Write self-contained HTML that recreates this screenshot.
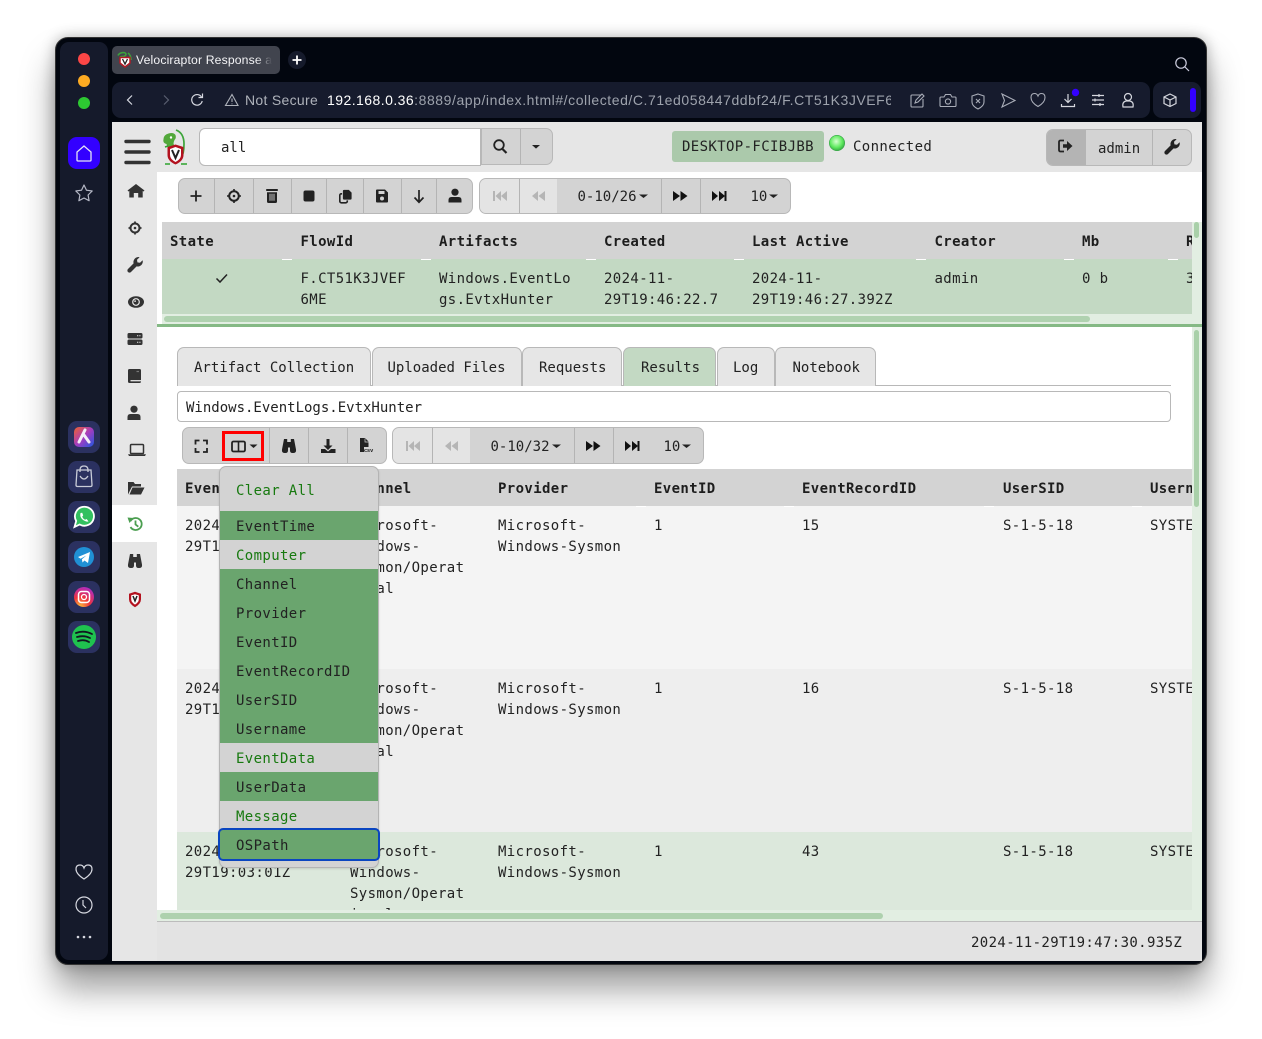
<!DOCTYPE html>
<html><head><meta charset="utf-8">
<style>
html,body{margin:0;padding:0;background:#fff;width:1262px;height:1039px;overflow:hidden}
div,span{position:absolute;box-sizing:border-box}
#win{left:55px;top:37px;width:1152px;height:928px;background:#02060f;border-radius:13px;box-shadow:0 24px 34px rgba(0,0,0,.38),0 0 14px rgba(0,0,0,.28);border:1px solid #333}
.b{font-family:"Liberation Sans",sans-serif;white-space:pre}
.t{font:14px/21px "DejaVu Sans Mono","Liberation Mono",monospace;color:#222;white-space:pre}
.w{letter-spacing:.37px}
.h{font-weight:bold;letter-spacing:.37px;font-size:14px;color:#1d1d1d}
.grp{background:#d3d3d3;border:1px solid #b8b8b8;border-radius:7px}
.sep{width:1px;background:#b4b4b4}
.tab{top:347px;height:39px;background:#e6e6e6;border:1px solid #b8b8b8;border-bottom:none;border-radius:7px 7px 0 0}
.tick{height:1px;width:10px;background:#fff}
.clip{overflow:hidden}
.it{left:1px;width:158px;height:29px;background:#6aa56e}
.gr{background:#d3d3d3}
.lbl{left:236px;letter-spacing:.37px}
.g{color:#17790f}
</style></head><body>
<div id="win"></div>
<div style="left:60px;top:42px;width:48px;height:918px;background:#151a2b;border-radius:9px"></div>
<div style="left:112px;top:46px;width:168px;height:28px;background:#41444e;border-radius:5px"></div>
<div class="b" style="left:136px;top:52px;width:138px;height:16px;overflow:hidden;font-size:12.2px;line-height:16px;color:#f4f4f6;letter-spacing:.15px">Velociraptor Response a</div>
<div style="left:256px;top:52px;width:20px;height:16px;background:linear-gradient(90deg,rgba(65,68,78,0),#41444e 80%)"></div>
<div style="left:112px;top:82px;width:1038px;height:36px;background:#161b2d;border-radius:9px"></div>
<div style="left:1153px;top:82px;width:48px;height:36px;background:#161b2d;border-radius:9px"></div>
<div class="b" style="left:245px;top:91px;font-size:14px;line-height:18px;color:#aeb2ba;letter-spacing:.3px">Not Secure</div>
<div class="b" style="left:327px;top:91px;width:564px;height:18px;overflow:hidden;font-size:14px;line-height:18px;color:#9ea3ad;letter-spacing:.56px"><span style="position:static;color:#fff;letter-spacing:.45px">192.168.0.36</span>:8889/app/index.html#/collected/C.71ed058447ddbf24/F.CT51K3JVEF6ME</div>

<!-- app -->
<div style="left:112px;top:122px;width:1090px;height:839px;background:#e6e6e6"></div>
<div style="left:157px;top:172px;width:1045px;height:749px;background:#fff"></div>
<div style="left:157px;top:921px;width:1045px;height:40px;background:#e3e3e3;border-top:1px solid #bcbcbc"></div>
<div style="left:112px;top:505px;width:45px;height:37px;background:#fff"></div>

<!-- header -->
<div style="left:199px;top:128px;width:282px;height:38px;background:#fff;border:1px solid #b8b8b8;border-radius:6px 0 0 6px"></div>
<div class="t" style="left:221px;top:138px">all</div>
<div class="grp" style="left:481px;top:128px;width:72px;height:37px;border-radius:0 7px 7px 0"><div class="sep" style="left:38px;top:0;height:35px"></div></div>
<div style="left:672px;top:131px;width:152px;height:31px;background:#abc9ab;border-radius:3px"></div>
<div class="t w" style="left:682px;top:137px">DESKTOP-FCIBJBB</div>
<div class="t w" style="left:853px;top:137px">Connected</div>
<div class="grp" style="left:1046px;top:129px;width:146px;height:37px;overflow:hidden">
  <div style="left:0;top:0;width:39px;height:35px;background:#b4b4b4"></div>
  <div class="sep" style="left:105px;top:0;height:35px"></div>
</div>
<div class="t" style="left:1098px;top:139px">admin</div>

<!-- toolbar 1 -->
<div class="grp" style="left:178px;top:178px;width:295px;height:36px">
  <div class="sep" style="left:35px;top:0;height:34px"></div><div class="sep" style="left:74px;top:0;height:34px"></div><div class="sep" style="left:112px;top:0;height:34px"></div><div class="sep" style="left:147px;top:0;height:34px"></div><div class="sep" style="left:184px;top:0;height:34px"></div><div class="sep" style="left:222px;top:0;height:34px"></div><div class="sep" style="left:257px;top:0;height:34px"></div>
</div>
<div class="grp" style="left:479px;top:178px;width:312px;height:36px;overflow:hidden">
  <div style="left:0;top:0;width:77px;height:34px;background:#e4e4e4"></div>
  <div class="sep" style="left:39px;top:0;height:34px"></div><div class="sep" style="left:181px;top:0;height:34px"></div><div class="sep" style="left:220px;top:0;height:34px"></div>
</div>
<div class="t" style="left:577.500px;top:187px">0-10/26</div>
<div class="t" style="left:750.500px;top:187px">10</div>

<!-- table 1 -->
<div style="left:1192px;top:222px;width:10px;height:102px;background:#e2eee2"></div>
<div style="left:162px;top:314px;width:1030px;height:10px;background:#e2eee2"></div>
<div style="left:162px;top:222px;width:1030px;height:37px;background:#d3d3d3"></div>
<div style="left:162px;top:259px;width:1030px;height:55px;background:#c3d9c3"></div>
<div style="left:164px;top:316px;width:926px;height:6px;background:#b0d2b0;border-radius:3px"></div>
<div style="left:1194px;top:222px;width:5px;height:16px;background:#a9d0a9;border-radius:3px"></div>
<div style="left:157px;top:324px;width:1045px;height:3px;background:#85b985"></div>
<div class="tick" style="left:282px;top:259px"></div><div class="tick" style="left:421px;top:259px"></div><div class="tick" style="left:586px;top:259px"></div><div class="tick" style="left:734px;top:259px"></div><div class="tick" style="left:916px;top:259px"></div><div class="tick" style="left:1064px;top:259px"></div><div class="tick" style="left:1168px;top:259px"></div>
<div class="clip" style="left:162px;top:222px;width:1030px;height:92px">
<div class="t h" style="left:8px;top:10px">State</div>
<div class="t h" style="left:138.500px;top:10px">FlowId</div>
<div class="t h" style="left:277px;top:10px">Artifacts</div>
<div class="t h" style="left:442px;top:10px">Created</div>
<div class="t h" style="left:590px;top:10px">Last Active</div>
<div class="t h" style="left:772.500px;top:10px">Creator</div>
<div class="t h" style="left:920px;top:10px">Mb</div>
<div class="t h" style="left:1024px;top:10px">R</div>
<div class="t w" style="left:138.500px;top:47px">F.CT51K3JVEF
6ME</div>
<div class="t w" style="left:277px;top:47px">Windows.EventLo
gs.EvtxHunter</div>
<div class="t w" style="left:442px;top:47px">2024-11-
29T19:46:22.7</div>
<div class="t w" style="left:590px;top:47px">2024-11-
29T19:46:27.392Z</div>
<div class="t w" style="left:772.500px;top:47px">admin</div>
<div class="t w" style="left:920px;top:47px">0 b</div>
<div class="t w" style="left:1024px;top:47px">3</div>
</div>

<!-- tabs -->
<div style="left:1192px;top:327px;width:10px;height:594px;background:#e2eee2"></div>
<div style="left:1194px;top:330px;width:5px;height:177px;background:#a9d0a9;border-radius:3px"></div>
<div style="left:177px;top:385px;width:994px;height:1px;background:#b8b8b8"></div>
<div class="tab" style="left:177px;width:194px"></div>
<div class="tab" style="left:372px;width:150px"></div>
<div class="tab" style="left:522px;width:100px"></div>
<div class="tab" style="left:623px;width:93px;background:#c3d9c3"></div>
<div class="tab" style="left:717px;width:58px"></div>
<div class="tab" style="left:775px;width:101px"></div>
<div class="t" style="left:194px;top:358px">Artifact Collection</div>
<div class="t" style="left:387.500px;top:358px">Uploaded Files</div>
<div class="t" style="left:539px;top:358px">Requests</div>
<div class="t" style="left:641px;top:358px">Results</div>
<div class="t" style="left:733px;top:358px">Log</div>
<div class="t" style="left:792.500px;top:358px">Notebook</div>
<div style="left:177px;top:391px;width:994px;height:31px;background:#fff;border:1px solid #b8b8b8;border-radius:4px"></div>
<div class="t" style="left:186px;top:398px">Windows.EventLogs.EvtxHunter</div>

<!-- toolbar 2 -->
<div class="grp" style="left:182px;top:427px;width:205px;height:37px">
  <div class="sep" style="left:86px;top:0;height:35px"></div><div class="sep" style="left:125px;top:0;height:35px"></div><div class="sep" style="left:164px;top:0;height:35px"></div>
</div>
<div style="left:222px;top:431px;width:42px;height:30px;border:3px solid #f00"></div>
<div class="grp" style="left:392px;top:427px;width:312px;height:37px;overflow:hidden">
  <div style="left:0;top:0;width:77px;height:35px;background:#e4e4e4"></div>
  <div class="sep" style="left:39px;top:0;height:35px"></div><div class="sep" style="left:181px;top:0;height:35px"></div><div class="sep" style="left:220px;top:0;height:35px"></div>
</div>
<div class="t" style="left:490.500px;top:437px">0-10/32</div>
<div class="t" style="left:663.500px;top:437px">10</div>

<!-- table 2 -->
<div class="clip" style="left:177px;top:469px;width:1015px;height:441px;background:#fff">
<div style="left:0;top:0;width:1015px;height:37px;background:#d3d3d3"></div>
<div style="left:0;top:37px;width:1015px;height:163px;background:#f4f4f4"></div>
<div style="left:0;top:200px;width:1015px;height:163px;background:#eeeeee"></div>
<div style="left:0;top:363px;width:1015px;height:78px;background:#dce8dc"></div>
<div class="tick" style="left:807px;top:37px"></div><div class="tick" style="left:955px;top:37px"></div><div class="tick" style="left:459px;top:37px"></div><div class="tick" style="left:607px;top:37px"></div>
<div class="t h" style="left:8px;top:10px">EventTime</div>
<div class="t h" style="left:173px;top:10px">Channel</div>
<div class="t h" style="left:321px;top:10px">Provider</div>
<div class="t h" style="left:477px;top:10px">EventID</div>
<div class="t h" style="left:625px;top:10px">EventRecordID</div>
<div class="t h" style="left:826px;top:10px">UserSID</div>
<div class="t h" style="left:973px;top:10px">Username</div>

<div class="t w" style="left:8px;top:47px">2024-11-
29T19:01:58Z</div>
<div class="t w" style="left:173px;top:47px">Microsoft-
Windows-
Sysmon/Operat
ional</div>
<div class="t w" style="left:321px;top:47px">Microsoft-
Windows-Sysmon</div>
<div class="t w" style="left:477px;top:47px">1</div>
<div class="t w" style="left:625px;top:47px">15</div>
<div class="t w" style="left:826px;top:47px">S-1-5-18</div>
<div class="t w" style="left:973px;top:47px">SYSTEM</div>

<div class="t w" style="left:8px;top:210px">2024-11-
29T19:02:07Z</div>
<div class="t w" style="left:173px;top:210px">Microsoft-
Windows-
Sysmon/Operat
ional</div>
<div class="t w" style="left:321px;top:210px">Microsoft-
Windows-Sysmon</div>
<div class="t w" style="left:477px;top:210px">1</div>
<div class="t w" style="left:625px;top:210px">16</div>
<div class="t w" style="left:826px;top:210px">S-1-5-18</div>
<div class="t w" style="left:973px;top:210px">SYSTEM</div>

<div class="t w" style="left:8px;top:373px">2024-11-
29T19:03:01Z</div>
<div class="t w" style="left:173px;top:373px">Microsoft-
Windows-
Sysmon/Operat
ional</div>
<div class="t w" style="left:321px;top:373px">Microsoft-
Windows-Sysmon</div>
<div class="t w" style="left:477px;top:373px">1</div>
<div class="t w" style="left:625px;top:373px">43</div>
<div class="t w" style="left:826px;top:373px">S-1-5-18</div>
<div class="t w" style="left:973px;top:373px">SYSTEM</div>
</div>
<div style="left:157px;top:910px;width:1035px;height:11px;background:#e2eee2"></div>
<div style="left:160px;top:913px;width:723px;height:6px;background:#aed1ae;border-radius:3px"></div>
<div class="t" style="left:971px;top:933px;letter-spacing:.37px">2024-11-29T19:47:30.935Z</div>

<!-- icons -->
<svg width="1262" height="1039" viewBox="0 0 1262 1039" style="position:absolute;left:0;top:0">
<defs>
<linearGradient id="arc" x1="0" y1="0" x2="1" y2="1"><stop offset="0" stop-color="#f0622c"/><stop offset=".5" stop-color="#a53cc0"/><stop offset="1" stop-color="#1f58e0"/></linearGradient>
<radialGradient id="ig" cx=".3" cy="1" r="1.1"><stop offset="0" stop-color="#fdc13a"/><stop offset=".45" stop-color="#f0343c"/><stop offset="1" stop-color="#a82bd0"/></radialGradient>
<radialGradient id="led" cx=".45" cy=".4" r=".65"><stop offset="0" stop-color="#d6ffd0"/><stop offset=".6" stop-color="#5fea5f"/><stop offset="1" stop-color="#2f9f3f"/></radialGradient>
</defs>
<!-- traffic lights -->
<circle cx="84" cy="59" r="6" fill="#fb4646"/><circle cx="84" cy="81" r="6" fill="#fcaa22"/><circle cx="84" cy="103" r="6" fill="#2dc832"/>
<!-- browser sidebar -->
<rect x="68" y="137" width="32" height="32" rx="9" fill="#3300ff"/>
<path d="M77 160v-8l7-6 7 6v8q0 1-1 1H78q-1 0-1-1z" fill="none" stroke="#e5e5f5" stroke-width="1.300"/>
<path d="M84 185l2.500 5.200 5.700.8-4.100 4 1 5.700-5.100-2.700-5.100 2.700 1-5.700-4.100-4 5.700-.8z" fill="none" stroke="#b5b8c6" stroke-width="1.200" stroke-linejoin="round"/>
<g fill="#2b3160"><rect x="68" y="421" width="32" height="32" rx="9"/><rect x="68" y="461" width="32" height="32" rx="9"/><rect x="68" y="501" width="32" height="32" rx="9"/><rect x="68" y="541" width="32" height="32" rx="9"/><rect x="68" y="581" width="32" height="32" rx="9"/><rect x="68" y="621" width="32" height="32" rx="9"/></g>
<rect x="74" y="427" width="20" height="20" rx="5" fill="url(#arc)"/>
<path d="M85 430l-6 12M84 435l5 7" stroke="#f4eef8" stroke-width="3" fill="none" stroke-linecap="round"/>
<path d="M77 470h14l1 15q0 1.500-1.500 1.500h-13q-1.500 0-1.500-1.500z M80 472v-2q0-4 4-4t4 4v2M80 476q4 6 8 0" fill="none" stroke="#c9ccd8" stroke-width="1.300"/>
<path d="M74.500 527l1.700-6a9.500 9.500 0 1 1 3.500 3.500z" fill="#33c060" stroke="#fff" stroke-width="1.800"/>
<path d="M80.500 513q-1 4 2 6.500t6 2l-1.800-2.500-1.700.7q-2-1-2.800-3l1-1.300-1-2.700z" fill="#fff"/>
<circle cx="84" cy="557" r="10" fill="#2090d5"/>
<path d="M78 557l12-5-2 11-3.500-2.500-2 2-.6-3.200 4.500-3.800-5.800 3.200z" fill="#fff"/>
<circle cx="84" cy="597" r="10" fill="url(#ig)"/>
<rect x="78.500" y="591.500" width="11" height="11" rx="3" fill="none" stroke="#fff" stroke-width="1.500"/><circle cx="84" cy="597" r="2.500" fill="none" stroke="#fff" stroke-width="1.300"/>
<circle cx="84" cy="637" r="12" fill="#1fc24f"/>
<path d="M76 633q8-3 16 1M77 637q7-2 13 1M78 641q6-2 11 1" fill="none" stroke="#101820" stroke-width="1.800" stroke-linecap="round"/>
<path d="M84 879q-8-5-8-10 0-4 4-4 3 0 4 3 1-3 4-3 4 0 4 4 0 5-8 10z" fill="none" stroke="#d6d8e0" stroke-width="1.200"/>
<circle cx="84" cy="905" r="8" fill="none" stroke="#d6d8e0" stroke-width="1.200"/><path d="M83 900v5l3 3" fill="none" stroke="#d6d8e0" stroke-width="1.200"/>
<circle cx="78" cy="937" r="1.300" fill="#d6d8e0"/><circle cx="84" cy="937" r="1.300" fill="#d6d8e0"/><circle cx="90" cy="937" r="1.300" fill="#d6d8e0"/>
<!-- tab favicon -->
<path d="M118 55.500q1-2.500 5-3 3 0 3 2-1 2-3 2t-3 .5M128 53q3 2 3 7" fill="none" stroke="#3ba43b" stroke-width="1.500"/>
<path d="M120 57.500h10v5.500l-5 4-5-4z" fill="#fff" stroke="#b21a24" stroke-width="1.500"/><path d="M122.500 59l2.500 5 2.500-5" fill="none" stroke="#222" stroke-width="1.300"/>
<circle cx="297" cy="60" r="9" fill="#151a2b"/><path d="M297 55.500v9M292.500 60h9" stroke="#fff" stroke-width="1.800"/>
<circle cx="1181" cy="63" r="5.200" fill="none" stroke="#ccd" stroke-width="1.200"/><path d="M1185 67l4 4" stroke="#ccd" stroke-width="1.200"/>
<!-- nav -->
<path d="M132 95.500l-4.500 4.500 4.500 4.500" fill="none" stroke="#d6d8e0" stroke-width="1.200"/>
<path d="M164 95.500l4.500 4.500-4.500 4.500" fill="none" stroke="#5a5f70" stroke-width="1.200"/>
<path d="M201.500 97a5.300 5.300 0 1 0 .7 4" fill="none" stroke="#d6d8e0" stroke-width="1.200"/><path d="M198.500 97.500h4v-4" fill="none" stroke="#d6d8e0" stroke-width="1.200"/>
<path d="M232 94.500l6 11h-12.500zM232 98.500v3.500M232 103.500v.7" fill="none" stroke="#aeb2ba" stroke-width="1.100"/>
<g fill="none" stroke="#a9adb8" stroke-width="1.100">
<path d="M921 95h-9q-1 0-1 1v10q0 1 1 1h10q1 0 1-1v-7M915 103l1-3 6-6 2 2-6 6z"/>
<path d="M941 97h3l1.500-2.500h5L952 97h3q1 0 1 1v7.500q0 1-1 1h-14q-1 0-1-1V98q0-1 1-1z"/><circle cx="948" cy="101.500" r="2.600"/>
<path d="M978 94l6 2v6q0 4-6 7-6-3-6-7v-6zM976 99l4 4M980 99l-4 4"/>
<path d="M1002 94l13 6.500-13 6.500 2.500-6.500z"/>
<path d="M1038 107q-7-4-7-9 0-4 3.500-4 2.500 0 3.500 2.500 1-2.500 3.500-2.500 3.500 0 3.500 4 0 5-7 9z" transform="translate(0,-.5)"/>
</g>
<g fill="none" stroke="#d5d7de" stroke-width="1.200">
<circle cx="1128" cy="97" r="3.500"/><path d="M1123 107q-1-5 3-6h4q4 1 3 6z"/>
<path d="M1068 94v8M1064.500 99l3.500 3.500 3.500-3.500M1061.500 104v2.500h13V104"/>
<path d="M1092 95.500h12M1092 100h12M1092 104.500h12"/><path d="M1099 94v3M1095 98.500v3M1100 103v3"/>
<path d="M1170 94l6 3v6.500l-6 3-6-3V97zM1164 97l6 3 6-3M1170 100v6.500"/>
</g>
<circle cx="1075.500" cy="92.500" r="3.700" fill="#3300ff"/>
<rect x="1190" y="88" width="6" height="24" rx="3" fill="#3300ff"/>
<!-- hamburger -->
<path d="M126 141.500h23M126 152h23M126 162.500h23" stroke="#333" stroke-width="3.400" stroke-linecap="round"/>
<!-- logo -->
<path d="M176 130q8 3 8 14 0 10-3 14" fill="none" stroke="#3da53a" stroke-width="1.700"/>
<path d="M163.500 139q0-4 5-5.500 5-1.500 7 1.500 1 3-1 5-1 2-1 4l2 3h-8l-1-3q-4-1-3-5z" fill="#52a83a"/>
<circle cx="171" cy="137.500" r="1.200" fill="#fff"/>
<path d="M168 146l-3 1M165 164h5M181 164h6" stroke="#2fa32f" stroke-width="1.600"/>
<path d="M167.500 147l8-2.500 8 2.500v8q0 6-8 9.500-8-3.500-8-9.500z" fill="#b3121f"/>
<path d="M170 149l5.500-2 5.500 2v6q0 4-5.500 7-5.500-3-5.500-7z" fill="#fff"/>
<path d="M172 150l3.500 8 3.500-8" fill="none" stroke="#222" stroke-width="2"/>
<!-- header icons -->
<circle cx="499" cy="145" r="4.800" fill="none" stroke="#222" stroke-width="1.800"/><path d="M502.500 149l4 4" stroke="#222" stroke-width="2.200"/>
<path d="M532 145h8l-4 3.600z" fill="#222"/>
<circle cx="837" cy="143" r="7.700" fill="url(#led)" stroke="#3aa64a" stroke-width=".6"/>
<g transform="translate(1066,146)"><path d="M-2-5.500h-3.500q-1.500 0-1.500 1.500v8q0 1.500 1.500 1.500H-2" fill="none" stroke="#222" stroke-width="1.800"/><path d="M-3-1.800h4v-3.200L6.500 0 1 5V1.800h-4z" fill="#222"/></g>
<path transform="translate(1172,147)" d="M7.600-4.800L5-2.200l-2.600-.4L2-5.200l2.600-2.600A5 5 0 0 0-1.400-1.600L-7 4a2 2 0 0 0 3 3l5.600-5.600a5 5 0 0 0 6-6.200z" fill="#222"/>
<!-- sidebar -->
<g fill="#333">
<path d="M136 184l8.500 6.500-1 1-.8-.5v6.500h-4.500v-4.500h-4.400v4.500h-4.500V191l-.8.500-1-1z"/>
<g transform="translate(135,228)"><circle r="4.500" fill="none" stroke="#333" stroke-width="2"/><circle r="1.300"/><path d="M0-6.500v3M0 3.500v3M-6.500 0h3M3.500 0h3" stroke="#333" stroke-width="1.800"/></g>
<path transform="translate(135,265)" d="M7.600-4.800L5-2.200l-2.600-.4L2-5.200l2.600-2.600A5 5 0 0 0-1.400-1.600L-7 4a2 2 0 0 0 3 3l5.600-5.600a5 5 0 0 0 6-6.200z"/>
<g transform="translate(136,302)"><ellipse rx="8" ry="5.800"/><circle r="3.900" fill="#e6e6e6"/><circle r="2.700"/><circle cx="-.9" cy="-.9" r=".9" fill="#e6e6e6"/></g>
<g transform="translate(135,339)"><rect x="-7.500" y="-6" width="15" height="5.500" rx="1.500"/><rect x="-7.500" y=".5" width="15" height="5.500" rx="1.500"/><path d="M2-3.200h3.500M2 3.200h3.500" stroke="#e6e6e6" stroke-dasharray="1.300 1"/></g>
<g transform="translate(134.500,376)"><rect x="-6.500" y="-7" width="13" height="14" rx="1.500"/><path d="M-4 4.700h10.500" stroke="#e6e6e6" stroke-width="1.300"/><path d="M2-4.500h2.500" stroke="#777" stroke-width="1.200"/></g>
<g transform="translate(134,413)"><circle cy="-3.800" r="3.600"/><path d="M-6.500 7V4q0-3 3-3h7q3 0 3 3v3z"/></g>
<g transform="translate(137,450)"><rect x="-6.500" y="-5.500" width="13" height="9" rx="1" fill="none" stroke="#333" stroke-width="1.500"/><path d="M-9 4.200h18l-1 1.800H-8z"/></g>
<path d="M128 494.500v-12.500h5.500l1.500 2h6v2.500h-9zM129.500 494.500l3-7h12l-3.500 7z"/>
<path transform="translate(135,561)" d="M-5-7H-1.800V-4H1.800V-7H5L7 3.500Q7.500 7 4.500 7H3.500Q1 7 1 4.500V1.500H-1V4.500Q-1 7-3.500 7H-4.500Q-7.500 7-7 3.500Z"/>
</g>
<g fill="none" stroke="#4b9e50" stroke-width="1.800"><path d="M130.500 521a6 6 0 1 1 0 6"/><path d="M135.500 520.500v4l2.800 2.200"/></g><path d="M127.500 517.500l6 .5-4 5z" fill="#4b9e50"/>
<g transform="translate(135,599)"><path d="M0-7.200l6 2v5.500q0 4.500-6 8-6-3.500-6-8v-5.500z" fill="#b3121f"/><path d="M0-4.800l3.800 1.200v4q0 2.800-3.800 5.200-3.800-2.400-3.800-5.200v-4z" fill="#fff"/><path d="M-2-3L0 2l2-5" fill="none" stroke="#222" stroke-width="1.500"/></g>
<!-- toolbar 1 icons -->
<path d="M196 190.500v11M190.500 196h11" stroke="#222" stroke-width="1.800"/>
<g transform="translate(234,196)"><circle r="4.800" fill="none" stroke="#222" stroke-width="2"/><circle r="1.300" fill="#222"/><path d="M0-7v3M0 4v3M-7 0h3M4 0h3" stroke="#222" stroke-width="1.600"/></g>
<g transform="translate(272,196)" fill="#222"><path d="M-5.800-7h11.600v2H-5.800z"/><path d="M-5-3.800H5v9.300q0 1.500-1.500 1.500h-7Q-5 7-5 5.500z"/><path d="M-2-2.200v7M0-2.200v7M2-2.200v7" stroke="#d3d3d3" stroke-width=".9"/></g>
<rect x="303.500" y="190.500" width="11" height="11" rx="2" fill="#222"/>
<rect x="339.800" y="193.800" width="7.500" height="9" rx="1.500" fill="none" stroke="#222" stroke-width="1.600"/>
<path d="M344 189.500h5l3 3v6q0 1.500-1.500 1.500H344q-1.500 0-1.500-1.500v-7.500q0-1.500 1.500-1.500z" fill="#222" stroke="#d3d3d3" stroke-width=".8"/>
<g transform="translate(382,196)"><path d="M-6-5.500q0-1 1-1h8L6-3.500V5.500q0 1-1 1H-5q-1 0-1-1z" fill="#222"/><rect x="-3.500" y="-5" width="6" height="3" fill="#d3d3d3"/><circle cy="2.500" r="2" fill="#d3d3d3"/></g>
<path d="M419 190v12M414.500 197.500l4.500 4.800 4.500-4.800" fill="none" stroke="#222" stroke-width="1.700"/>
<g transform="translate(455,196)" fill="#222"><circle cy="-3.800" r="3.600"/><path d="M-6.500 6.500V4q0-3 3-3h7q3 0 3 3v2.500z"/></g>
<!-- pager icons -->
<g fill="#b5b5b5"><path d="M493 191h2v10h-2zM501 191v10l-5.500-5zM507 191v10l-6-5z"/><path d="M538 191v10l-6-5zM545 191v10l-6.500-5z"/></g>
<g fill="#111"><path d="M673 191l7 5-7 5zM680.500 191l7 5-7 5z"/><path d="M712 191l6 5-6 5zM719 191l6 5-6 5zM724.500 191h2v10h-2z"/></g>
<g fill="#222"><path d="M639 194.500h9l-4.500 3.500zM769 194.500h9l-4.500 3.500z"/></g>
<g fill="#b5b5b5"><path d="M406 441h2v10h-2zM414 441v10l-5.500-5zM420 441v10l-6-5z"/><path d="M451 441v10l-6-5zM458 441v10l-6.500-5z"/></g>
<g fill="#111"><path d="M586 441l7 5-7 5zM593.500 441l7 5-7 5z"/><path d="M625 441l6 5-6 5zM632 441l6 5-6 5zM637.500 441h2v10h-2z"/></g>
<g fill="#222"><path d="M552 444.500h9l-4.500 3.500zM682 444.500h9l-4.500 3.500z"/></g>
<!-- toolbar 2 icons -->
<path d="M195.500 444.500v-4h4M203 440.500h4v4M207 448v4h-4M199.500 452h-4v-4" fill="none" stroke="#222" stroke-width="1.800"/>
<rect x="232" y="441.500" width="13" height="10" rx="1.500" fill="none" stroke="#222" stroke-width="1.800"/><path d="M238.500 441.500v10" stroke="#222" stroke-width="1.600"/>
<path d="M249.500 444.500h8l-4 3.500z" fill="#222"/>
<path transform="translate(289,446)" fill="#222" d="M-5-7H-1.800V-4H1.800V-7H5L7 3.500Q7.500 7 4.500 7H3.500Q1 7 1 4.500V1.500H-1V4.500Q-1 7-3.500 7H-4.500Q-7.500 7-7 3.500Z"/>
<g fill="#222"><path d="M326.500 439h3v6.500h3l-4.500 4.500-4.500-4.500h3z"/><path d="M321 449h4l3 2.500 3-2.500h4.500v4h-14.500z"/></g>
<path d="M360 438h5l3.500 3.500v10.500h-8.500z" fill="#222"/><path d="M365 438.500v3.500h3.500" fill="none" stroke="#d3d3d3" stroke-width=".7"/>
<rect x="364" y="447" width="11" height="5.500" fill="#d3d3d3"/><text x="364" y="452" font-family="Liberation Sans,sans-serif" font-size="5.500" font-weight="bold" fill="#222">csv</text>
<!-- check -->
<path d="M216.500 278.500l3.500 3.500 7-7.500" fill="none" stroke="#222" stroke-width="1.500"/>
</svg>

<!-- dropdown -->
<div style="left:219px;top:466px;width:160px;height:402px;background:#d3d3d3;border:1px solid #b4b4b4;border-radius:7px;box-shadow:0 1px 2px rgba(0,0,0,.12)">
  <div class="it" style="left:0;top:44px"></div>
  <div class="it gr" style="left:0;top:73px"></div>
  <div class="it" style="left:0;top:102px"></div>
  <div class="it" style="left:0;top:131px"></div>
  <div class="it" style="left:0;top:160px"></div>
  <div class="it" style="left:0;top:189px"></div>
  <div class="it" style="left:0;top:218px"></div>
  <div class="it" style="left:0;top:247px"></div>
  <div class="it gr" style="left:0;top:276px"></div>
  <div class="it" style="left:0;top:305px"></div>
  <div class="it gr" style="left:0;top:334px"></div>
</div>
<div style="left:218px;top:828px;width:162px;height:33px;background:#6aa56e;border:2px solid #0a45c0;border-radius:5px"></div>
<div class="t lbl g" style="top:481px">Clear All</div>
<div class="t lbl" style="top:517px">EventTime</div>
<div class="t lbl g" style="top:546px">Computer</div>
<div class="t lbl" style="top:575px">Channel</div>
<div class="t lbl" style="top:604px">Provider</div>
<div class="t lbl" style="top:633px">EventID</div>
<div class="t lbl" style="top:662px">EventRecordID</div>
<div class="t lbl" style="top:691px">UserSID</div>
<div class="t lbl" style="top:720px">Username</div>
<div class="t lbl g" style="top:749px">EventData</div>
<div class="t lbl" style="top:778px">UserData</div>
<div class="t lbl g" style="top:807px">Message</div>
<div class="t lbl" style="top:836px">OSPath</div>
</body></html>
